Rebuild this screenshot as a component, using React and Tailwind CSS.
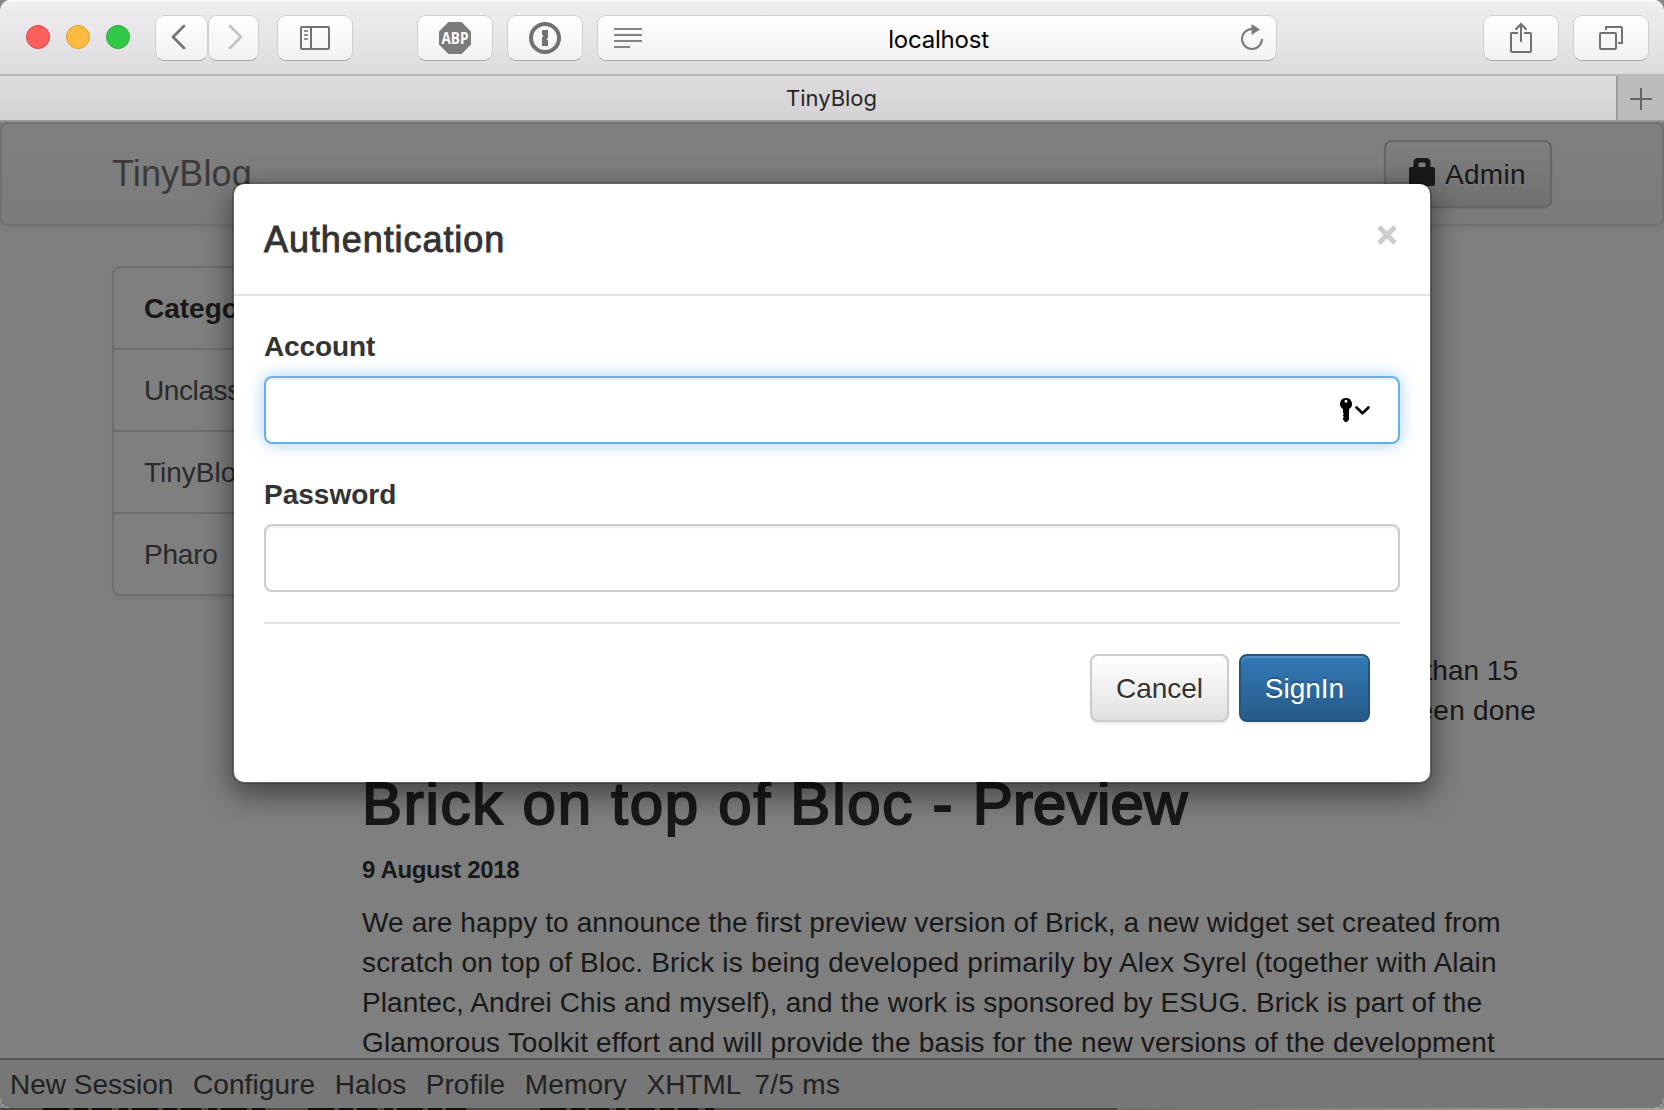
const BUTTON =
  'flex h-[46px] shrink-0 items-center justify-center rounded-[9px] border border-[#cfcdd0] border-b-[#a9a7aa] bg-gradient-to-b from-white to-[#f1f1f1]';

function ToolButton({ className, children }) {
  return <div className={`${BUTTON} ${className}`}>{children}</div>;
}

function TrafficLights() {
  return (
    <div className="ml-[26px] flex shrink-0 gap-4">
      <span className="size-6 rounded-full border border-[#e2463f] bg-[#fc605c]" />
      <span className="size-6 rounded-full border border-[#dfa033] bg-[#fdbc40]" />
      <span className="size-6 rounded-full border border-[#26ab35] bg-[#34c84a]" />
    </div>
  );
}

function Toolbar() {
  return (
    <div className="flex h-[76px] items-start border-b-2 border-[#bab8bb] bg-gradient-to-b from-[#f0eef1] to-[#dedbdf] pt-[15px] shadow-[inset_0_2px_0_#f7f6f8]">
      <div className="flex h-[44px] items-center">
        <TrafficLights />
      </div>
      <ToolButton className="ml-[25px] w-[53px] pr-[4px]">
        <svg width="24" height="28" viewBox="0 0 24 28" fill="none" stroke="#757575" strokeWidth="2.8" strokeLinecap="round" strokeLinejoin="round" className="mb-[2px]">
          <path d="M16 3 5 14l11 11" />
        </svg>
      </ToolButton>
      <ToolButton className="w-[51px]">
        <svg width="24" height="28" viewBox="0 0 24 28" fill="none" stroke="#c3c3c3" strokeWidth="2.8" strokeLinecap="round" strokeLinejoin="round" className="mb-[2px]">
          <path d="M8 3 19 14 8 25" />
        </svg>
      </ToolButton>
      <ToolButton className="ml-[18px] w-[76px]">
        <svg width="30" height="24" viewBox="0 0 30 24" fill="none" stroke="#717171" strokeWidth="2">
          <rect x="1" y="1" width="28" height="22" rx="1" />
          <path d="M11 1v22" />
          <path d="M4 5h4M4 9h4M4 13h4" strokeWidth="1.6" />
        </svg>
      </ToolButton>
      <ToolButton className="ml-16 w-[76px]">
        <svg width="32" height="32" viewBox="0 0 32 32">
          <path d="M9.4 0h13.2L32 9.4v13.2L22.6 32H9.4L0 22.6V9.4Z" fill="#7b7b7b" />
          <text x="16" y="21.7" textAnchor="middle" textLength="27" lengthAdjust="spacingAndGlyphs" fontFamily="Open Sans, sans-serif" fontWeight="700" fontSize="15.5" fill="#fff">ABP</text>
        </svg>
      </ToolButton>
      <ToolButton className="ml-[14px] w-[76px]">
        <svg width="32" height="32" viewBox="0 0 32 32">
          <circle cx="16" cy="16" r="14" fill="none" stroke="#717171" strokeWidth="4" />
          <path d="M13 8h6v7.500l-1.500 1.500 1.500 1.500V24h-6v-8.500l1.500-1.500-1.500-1.500Z" fill="#717171" />
        </svg>
      </ToolButton>
      <ToolButton className="ml-[14px] w-[680px] pl-4 pr-3">
        <svg width="28" height="20" viewBox="0 0 28 20" stroke="#838383" strokeWidth="2" className="mb-[1px] shrink-0">
          <path d="M0 1h28M0 7h28M0 13h28M0 19h16" />
        </svg>
        <span className="grow pr-[5px] pt-[4px] text-center font-['Inter',sans-serif] text-[24px] leading-[30px] tracking-[-0.2px] text-black">localhost</span>
        <svg width="24" height="28" viewBox="0 0 24 28" className="shrink-0">
          <path d="M12 5A10 10 0 1 0 22 15" fill="none" stroke="#7a7a7a" strokeWidth="2" />
          <path d="M11.500 0 20 5.500 11.500 11Z" fill="#7a7a7a" />
        </svg>
      </ToolButton>
      <ToolButton className="ml-auto w-[76px]">
        <svg width="24" height="32" viewBox="0 0 24 32" fill="none" stroke="#717171" strokeWidth="2">
          <path d="M9 11H2.500Q2 11 2 11.500V29q0 1 1 1h18q1 0 1-1V12q0-1-1-1h-6" />
          <path d="M12 20V2M6.500 7.800 12 2l5.500 5.800" />
        </svg>
      </ToolButton>
      <ToolButton className="ml-[14px] mr-[15px] w-[76px]">
        <svg width="24" height="24" viewBox="0 0 24 24" fill="none" stroke="#717171" strokeWidth="2">
          <rect x="1" y="7" width="16" height="16" rx="1" />
          <path d="M7 4V1h15q1 0 1 1v15h-4" />
        </svg>
      </ToolButton>
    </div>
  );
}

function TabBar() {
  return (
    <div className="flex h-[46px] border-b-2 border-[#9a999b]">
      <div className="flex grow items-center justify-center bg-gradient-to-b from-[#dddbde] to-[#d4d2d5] pl-[47px] font-['Inter',sans-serif] text-[22px] leading-none text-[#262626]">
        TinyBlog
      </div>
      <div className="flex w-12 items-center justify-center border-l-2 border-[#9d9c9e] bg-[#bdbbbe] pt-[2px]">
        <svg width="22" height="22" viewBox="0 0 22 22" stroke="#666" strokeWidth="2">
          <path d="M11 0v22M0 11h22" />
        </svg>
      </div>
    </div>
  );
}

function NavBar() {
  return (
    <div className="flex h-[104px] items-start justify-between rounded-lg border-2 border-[#e3e3e3] bg-gradient-to-b from-white to-[#f8f8f8] pl-[110px] pr-[110px] shadow-[0_2px_10px_rgba(0,0,0,0.075)]">
      <span className="pt-[30px] text-[36px] leading-10 tracking-[0.14px] text-[#777]">TinyBlog</span>
      <div className="mt-4 flex h-[68px] w-[168px] items-start rounded-lg border-2 border-[#ccc] bg-gradient-to-b from-white to-[#e0e0e0] pl-[23px] pt-[13px] text-[28px] leading-10 tracking-[0.3px] text-[#333] shadow-[0_2px_2px_rgba(0,0,0,0.075)] [text-shadow:0_2px_0_#fff]">
        <svg width="26" height="28" viewBox="0 0 26 28" fill="#333" className="mr-[10px] mt-[3px]">
          <path fillRule="evenodd" d="M4.500 9V4.500q0-4.500 4.500-4.500h8q4.500 0 4.500 4.500V9H24q2 0 2 2v15q0 2-2 2H2q-2 0-2-2V11q0-2 2-2ZM9.500 9h7V6q0-1.500-1.500-1.500h-4Q9.500 4.500 9.500 6Z" />
        </svg>
        Admin
      </div>
    </div>
  );
}

function Categories() {
  return (
    <div className="w-[190px] shrink-0 self-start overflow-hidden rounded-lg border-2 border-[#ddd] text-[28px] leading-10 text-[#555] shadow-[0_2px_4px_rgba(0,0,0,0.075)]">
      <div className="px-[30px] pb-[19px] pt-[21px] font-bold text-[#333]">Categories</div>
      <div className="border-t-2 border-[#ddd] px-[30px] pb-[19px] pt-[21px] tracking-[-0.4px]">Unclassified</div>
      <div className="border-t-2 border-[#ddd] px-[30px] pb-[19px] pt-[21px]">TinyBlog</div>
      <div className="border-t-2 border-[#ddd] px-[30px] pb-[19px] pt-[21px] tracking-[-0.2px]">Pharo</div>
    </div>
  );
}

function Article() {
  return (
    <div className="ml-[60px] grow whitespace-nowrap pt-[385px] text-[28px] leading-10 text-[#333]">
      <p className="pr-[34px] text-right">than 15</p>
      <p className="pr-4 text-right tracking-[0.2px]">been done</p>
      <h2 className="mt-10 text-[60px] leading-[66px] tracking-[1.76px] [-webkit-text-stroke:2px_#333]">
        Brick on top of Bloc - <span className="tracking-[0.2px]">Preview</span>
      </h2>
      <h6 className="mt-5 text-[24px] font-bold leading-[26px] tracking-[-0.35px]">9 August 2018</h6>
      <div className="mt-5">
        <p className="tracking-[0.120px]">We are happy to announce the first preview version of Brick, a new widget set created from</p>
        <p className="tracking-[0.185px]">scratch on top of Bloc. Brick is being developed primarily by Alex Syrel (together with Alain</p>
        <p className="tracking-[0.101px]">Plantec, Andrei Chis and myself), and the work is sponsored by ESUG. Brick is part of the</p>
        <p className="tracking-[0.147px]">Glamorous Toolkit effort and will provide the basis for the new versions of the development</p>
      </div>
    </div>
  );
}

function DevBar() {
  return (
    <div className="absolute inset-x-0 bottom-0 flex h-[50px] gap-[19.5px] border-t-2 border-[#aaa] bg-[#eee] pl-[10px] pt-[5px] text-[28px] leading-10 text-[#444]">
      <span>New Session</span>
      <span className="tracking-[0.1px]">Configure</span>
      <span>Halos</span>
      <span>Profile</span>
      <span className="tracking-[0.2px]">Memory</span>
      <span className="-mr-[6.5px]">XHTML</span>
      <span className="tracking-[0.3px]">7/5 ms</span>
    </div>
  );
}

function LoginDialog() {
  return (
    <div className="absolute left-[232px] top-[60px] w-[1200px] rounded-xl border-2 border-black/20 bg-white bg-clip-padding text-[#333] shadow-[0_10px_30px_rgba(0,0,0,0.5)]">
      <div className="flex h-[112px] items-start justify-between border-b-2 border-[#e5e5e5] px-[30px] pt-[30px]">
        <h4 className="text-[36px] leading-[52px] tracking-[0.93px] [-webkit-text-stroke:0.900px_#333]">Authentication</h4>
        <svg width="20" height="20" viewBox="0 0 20 20" stroke="#ccc" strokeWidth="5" className="mr-[3.5px] mt-[11px]">
          <path d="M2 2 18 18M18 2 2 18" />
        </svg>
      </div>
      <div className="px-[30px] pb-[60px] pt-[31px] text-[28px] leading-10">
        <div className="font-bold tracking-[-0.100px]">Account</div>
        <div className="mt-[9px] flex h-[68px] items-center justify-end rounded-lg border-2 border-[#66afe9] pr-7 shadow-[inset_0_2px_2px_rgba(0,0,0,0.075),0_0_16px_rgba(102,175,233,0.6)]">
          <svg width="30" height="24" viewBox="0 0 30 24">
            <path fillRule="evenodd" d="M6 0a6 6 0 0 1 3 11.200V21.500L7 24H5L3 21.500V20l1-1-1-1v-1l1-1-1-1v-3.800A6 6 0 0 1 6 0Zm0 1.800a1.500 1.500 0 1 0 0 3 1.500 1.500 0 0 0 0-3Z" />
            <path d="m16.500 9.500 6 5.800 6-5.800" fill="none" stroke="#000" strokeWidth="2.600" strokeLinecap="round" strokeLinejoin="round" />
          </svg>
        </div>
        <div className="mt-[31px] font-bold">Password</div>
        <div className="mt-[9px] h-[68px] rounded-lg border-2 border-[#ccc] shadow-[inset_0_2px_2px_rgba(0,0,0,0.075)]" />
        <div className="mt-[30px] flex justify-end gap-[10px] border-t-2 border-[#e5e5e5] pr-[30px] pt-[30px]">
          <div className="flex h-[68px] w-[139px] items-start justify-center rounded-lg border-2 border-[#ccc] bg-gradient-to-b from-white to-[#e0e0e0] pt-[13px] shadow-[0_2px_2px_rgba(0,0,0,0.075)] [text-shadow:0_2px_0_#fff]">
            Cancel
          </div>
          <div className="flex h-[68px] w-[131px] items-start justify-center rounded-lg border-2 border-[#245580] bg-gradient-to-b from-[#337ab7] to-[#265a88] bg-origin-border pt-[13px] text-white shadow-[inset_0_2px_0_rgba(255,255,255,0.15),0_2px_2px_rgba(0,0,0,0.075)] [text-shadow:0_-2px_0_rgba(0,0,0,0.2)]">
            SignIn
          </div>
        </div>
      </div>
    </div>
  );
}

export default function App() {
  return (
    <div className="h-[1110px] w-[1664px] overflow-hidden bg-[#858585] font-['Liberation_Sans',Arial,sans-serif]">
      <div className="h-[1108px] overflow-hidden rounded-[10px]">
        <Toolbar />
        <TabBar />
        <div className="relative h-[986px] overflow-hidden bg-white">
          <NavBar />
          <div className="flex px-[112px] pt-10">
            <Categories />
            <Article />
          </div>
          <DevBar />
          <div className="absolute inset-0 bg-black/50" />
          <LoginDialog />
        </div>
      </div>
      {/* Sliver of the window behind */}
      <div className="flex h-[2px]">
        <div className="h-[2px] w-[1117px] bg-[#4c484a]">
          <svg width="1117" height="2" viewBox="0 0 1117 2" stroke="#120c10" strokeWidth="2">
            <path d="M43 1H265M308 1H468M540 1H718" strokeDasharray="26 5 14 4 20 7 9 4" />
          </svg>
        </div>
        <div className="grow bg-gradient-to-r from-[#6e6e6e] to-[#a5a5a5]" />
      </div>
    </div>
  );
}
